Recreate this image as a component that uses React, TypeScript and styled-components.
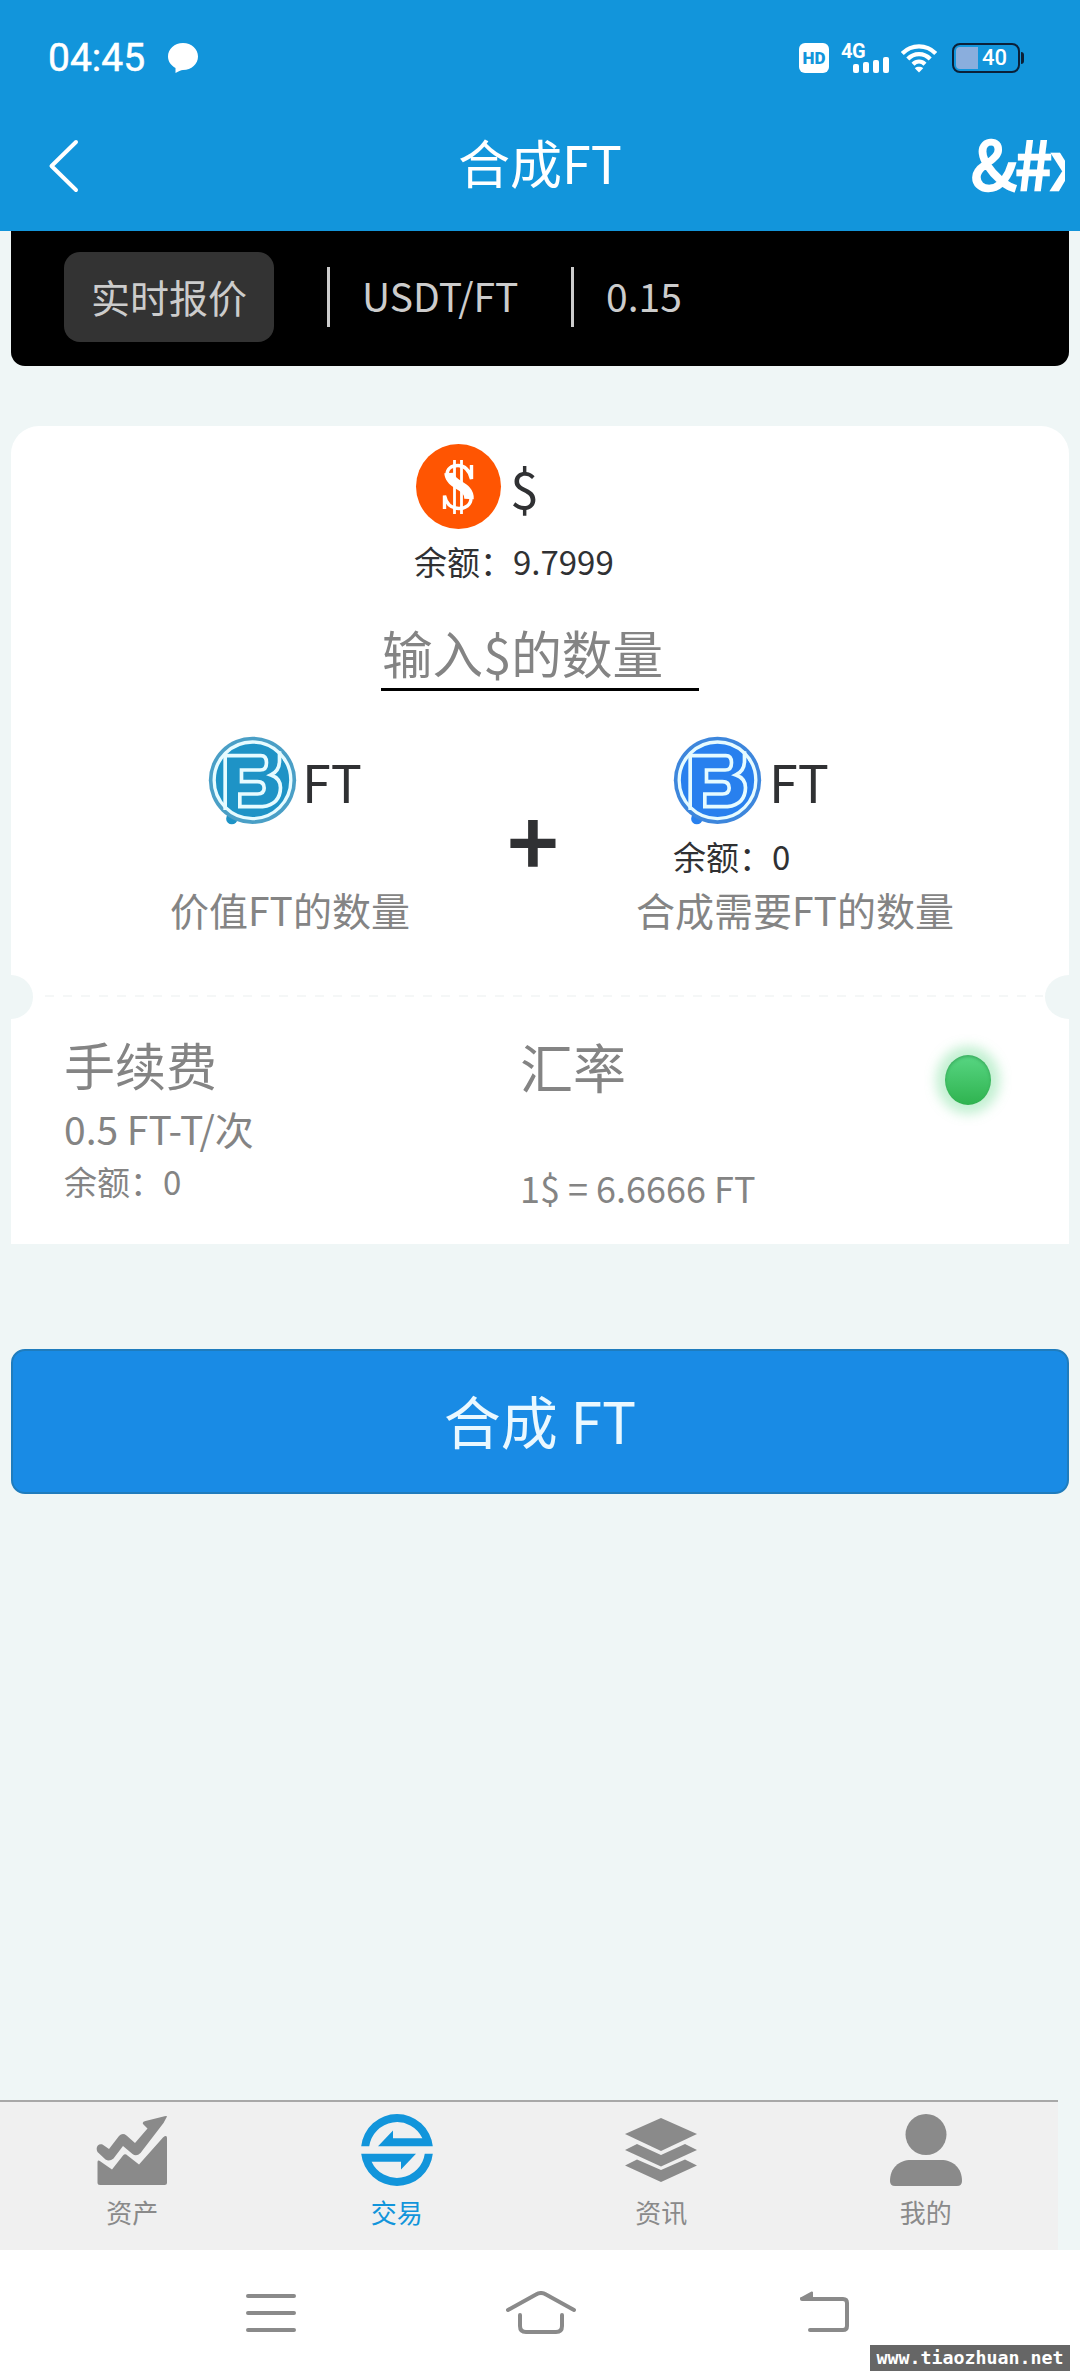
import React from "react";
import styled, { createGlobalStyle } from "styled-components";

const Global = createGlobalStyle`
  * { box-sizing: border-box; }
  html, body { margin: 0; padding: 0; background: #eff6f6; }
  body { font-family: "Noto Sans CJK SC", "Noto Sans", sans-serif; font-weight: 400; color: #303133; }
`;

const Page = styled.div`
  width: 1080px;
  height: 2376px;
  display: flex;
  flex-direction: column;
  background: #eff6f6;
  overflow: hidden;
`;

const Header = styled.header`
  height: 231px;
  background: #1295db;
  color: #fff;
  display: flex;
  flex-direction: column;
`;

const StatusBar = styled.div`
  height: 116px;
  padding: 0 56px 0 48px;
  display: flex;
  align-items: center;
`;

const Clock = styled.span`
  font: 400 39px/46px Roboto, sans-serif;
  width: 120px;
  -webkit-text-stroke: 0.5px #fff;
`;

const StatusIcons = styled.div`
  margin-left: auto;
  display: flex;
  align-items: center;
`;

const HdBadge = styled.span`
  width: 30px;
  height: 30px;
  border-radius: 6px;
  background: #fff;
  color: #1295db;
  font: 900 17px/31px Roboto, sans-serif;
  text-align: center;
  margin-right: 12px;
`;

const Network = styled.div`
  width: 48px;
  height: 30px;
  display: flex;
  margin-right: 12px;
`;

const NetworkLabel = styled.span`
  width: 12px;
  white-space: nowrap;
  font: 700 20px/16px Roboto, sans-serif;
  letter-spacing: -0.5px;
`;

const Bars = styled.div`
  flex: 1;
  display: flex;
  align-items: flex-end;
  justify-content: space-between;
`;

const Bar = styled.i<{ $h: number }>`
  width: 6px;
  height: ${(p) => p.$h}px;
  border-radius: 2px;
  background: #fff;
`;

const Battery = styled.div`
  width: 68px;
  height: 30px;
  border: 2px solid #0b2038;
  border-radius: 8px;
  padding: 2px;
  margin-left: 15px;
  display: flex;
  align-items: center;
`;

const Charge = styled.i`
  width: 22px;
  height: 22px;
  border-radius: 4px 0 0 4px;
  background: #8aaedd;
`;

const Percent = styled.span`
  font: 500 22px/24px Roboto, sans-serif;
  margin-left: 4px;
`;

const BatteryTip = styled.i`
  width: 3px;
  height: 12px;
  margin-left: 1px;
  border-radius: 0 3px 3px 0;
  background: #0b2038;
`;

const NavBar = styled.div`
  height: 99px;
  padding: 0 15px 0 48px;
  display: grid;
  grid-template-columns: 360px 1fr 94px;
  align-items: center;
`;

const PageTitle = styled.h1`
  margin: 0 0 8px;
  font-size: 52px;
  line-height: 76px;
  font-weight: inherit;
  padding-left: 50px;
`;

const NavAction = styled.span`
  font-size: 67px;
  line-height: 90px;
  font-weight: 400;
  letter-spacing: -1.5px;
  -webkit-text-stroke: 2.5px #fff;
  overflow: hidden;
  white-space: nowrap;
  margin-bottom: 10px;
`;

const Quote = styled.section`
  height: 135px;
  margin: 0 11px;
  padding: 0 53px 3px;
  border-radius: 0 0 14px 14px;
  background: #000;
  color: #ccc;
  display: flex;
  align-items: center;
  font-size: 39px;
  line-height: 57px;
`;

const QuoteChip = styled.span`
  width: 210px;
  height: 90px;
  line-height: 88px;
  border-radius: 16px;
  background: #333;
  text-align: center;
  margin-right: 53px;
`;

const QuoteCell = styled.span<{ $w: number }>`
  width: ${(p) => p.$w}px;
  height: 60px;
  border-left: 3px solid #ccc;
  padding-left: 32px;
`;

const Card = styled.section`
  height: 818px;
  margin: 60px 11px 0;
  background: #fff;
  border-radius: 28px 28px 0 0;
  display: flex;
  flex-direction: column;
`;

const Pay = styled.div`
  padding: 18px 0 0 370px;
  display: flex;
  flex-direction: column;
  align-items: flex-start;
`;

const TokenRow = styled.div<{ $gap: number; $indent: number; $h: number }>`
  height: ${(p) => p.$h}px;
  margin-left: ${(p) => p.$indent}px;
  display: flex;
  align-items: center;
  gap: ${(p) => p.$gap}px;
  font-size: 52px;
  line-height: 76px;
`;

const Balance = styled.div<{ $indent?: number; $top?: number }>`
  height: 48px;
  margin: ${(p) => p.$top ?? 0}px 0 0 ${(p) => p.$indent ?? 0}px;
  font-size: 33px;
  line-height: 50px;
`;

const AmountField = styled.div`
  width: 318px;
  height: 75px;
  margin-top: 32px;
  padding-left: 1px;
  border-bottom: 3px solid #000;
  color: #848484;
  font-size: 50.600px;
  line-height: 72px;
  white-space: nowrap;
`;

const Mix = styled.div`
  margin-top: 45px;
  padding-left: 159px;
  display: grid;
  grid-template-columns: 298px 130px 1fr;
`;

const MixColumn = styled.div<{ $pad?: number }>`
  padding-left: ${(p) => p.$pad ?? 0}px;
`;

const Plus = styled.div`
  height: 201px;
  padding-top: 3px;
  display: flex;
  align-items: center;
  justify-content: center;
  font-size: 88px;
  line-height: 100px;
  font-weight: 700;
`;

const Hint = styled.div`
  margin-top: 2px;
  color: #848484;
  font-size: 39px;
  line-height: 56px;
`;

const Perforation = styled.div`
  height: 44px;
  margin-top: 38px;
  display: flex;
  justify-content: space-between;
  align-items: center;
`;

const Notch = styled.i<{ $right?: boolean }>`
  width: ${(p) => (p.$right ? 24 : 22)}px;
  height: 44px;
  background: #eff6f6;
  border-radius: ${(p) => (p.$right ? "24px 0 0 24px / 22px 0 0 22px" : "0 22px 22px 0")};
`;

const Dashes = styled.i`
  flex: 1;
  height: 2px;
  margin: 0 2px 2px 12px;
  background: repeating-linear-gradient(90deg, #f5f7f7 0 9px, transparent 9px 18px);
`;

const Details = styled.div`
  padding: 15px 0 0 53px;
  display: flex;
  color: #848484;
`;

const DetailColumn = styled.div<{ $w: number }>`
  width: ${(p) => p.$w}px;
  white-space: nowrap;
`;

const DetailTitle = styled.div<{ $size: number; $lh: number }>`
  font-size: ${(p) => p.$size}px;
  line-height: ${(p) => p.$lh}px;
`;

const Fee = styled.div`
  margin-top: 6px;
  font-size: 39px;
  line-height: 56px;
`;

const Rate = styled.div`
  margin-top: 64px;
  font-size: 36px;
  line-height: 50px;
`;

const Lamp = styled.i`
  width: 46px;
  height: 50px;
  margin-top: 21px;
  border-radius: 50%;
  background: linear-gradient(#58d683, #2fb34f);
  box-shadow: 0 0 12px 9px rgba(88, 214, 131, 0.36), inset 0 2px 3px rgba(30, 130, 60, 0.45);
`;

const Submit = styled.button`
  height: 145px;
  margin: 105px 11px 0;
  padding: 0 0 5px;
  border: 2px solid #1f7cbd;
  border-radius: 14px;
  background: #198be5;
  color: #eaf8ff;
  font-family: inherit;
  font-weight: inherit;
  font-size: 57px;
  line-height: 80px;
`;

const TabBar = styled.nav`
  width: 1058px;
  height: 150px;
  margin-top: auto;
  border-top: 2px solid #a8a8a8;
  background: #f0f0f0;
  display: flex;
`;

const Tab = styled.a<{ $active?: boolean }>`
  flex: 1;
  padding-top: 12px;
  display: flex;
  flex-direction: column;
  align-items: center;
  color: ${(p) => (p.$active ? "#1295db" : "#8a8a8a")};
  font-size: 26px;
  line-height: 38px;
  svg { fill: currentColor; margin-bottom: 7px; }
`;

const SystemNav = styled.footer`
  height: 126px;
  background: #fff;
  display: flex;
  padding: 41px 0 0 246px;
  position: relative;
  svg {
    fill: none;
    stroke: #8a8a8a;
    stroke-width: 4;
    stroke-linecap: round;
    stroke-linejoin: round;
  }
`;

const Watermark = styled.span`
  position: absolute;
  left: 870px;
  bottom: 5px;
  width: 200px;
  height: 26px;
  background: #666;
  color: #fff;
  text-align: center;
  font: 700 18.300px/25px "DejaVu Sans Mono", monospace;
`;

const Bubble = () => (
  <svg width="30" height="30" viewBox="0 0 30 30" fill="#fff">
    <path d="M15 0C23.500 0 30 6 30 13.500S23.500 27 15 27C13 27 10 28.500 7.500 30V25C3 22.500 0 18.500 0 13.500C0 6 6.500 0 15 0Z" />
  </svg>
);

const Wifi = () => (
  <svg width="36" height="29" viewBox="0 0 36 29" fill="none" stroke="#fff" strokeWidth="4.200">
    <path d="M1.300 9.500C10.500 0 25.500 0 34.700 9.500" />
    <path d="M6.800 15C13 8.500 23 8.500 29.200 15" />
    <path d="M12 20.300C15.500 16.800 20.500 16.800 24 20.300" />
    <path d="M18 28.500L13.800 24.200C16 22.400 20 22.400 22.200 24.200Z" fill="#fff" stroke="none" />
  </svg>
);

const BackChevron = () => (
  <svg width="32" height="54" viewBox="0 0 32 54" fill="none" stroke="#fff" strokeWidth="4" strokeLinecap="round" strokeLinejoin="round">
    <path d="M28 3L3.500 27L28 51" />
  </svg>
);

const DollarDisc = styled.span`
  width: 85px;
  height: 85px;
  border-radius: 50%;
  background: #ff5502;
  display: flex;
  align-items: center;
  justify-content: center;
  svg { display: block; }
`;

const DollarMark = () => (
  <svg width="34" height="56" viewBox="0 0 34 56" fill="none" stroke="#fff">
    <path d="M12.500 1V55M19.500 1V55" strokeWidth="2.800" />
    <path d="M29.500 6V20C27 10 22 6.500 16 6.500C9 6.500 5 10 5 15.500C5 28 29 25 29 39C29 46 23.500 49.500 17 49.500C10 49.500 4.500 46 2.500 36.500V50" strokeWidth="3.400" />
    <path d="M7 14C8 27 28 26 27 40" strokeWidth="9.500" />
  </svg>
);

const TokenLogo = ({ main, rim }: { main: string; rim: string }) => (
  <svg width="89" height="89" viewBox="0 0 266 267">
    <circle cx="71" cy="248" r="17" fill={main} />
    <circle cx="133" cy="133" r="131" fill={rim} />
    <circle cx="133" cy="133" r="115" fill={main} stroke="#e6fbff" strokeWidth="10" />
    <path d="M218 50C226 62 236 76 242 94L226 74Z" fill="#e6fbff" />
    <path
      d="M51 222V59H158Q175 59 175 80Q175 102 156 102H100V137H148Q168 137 168 156Q168 174 148 174H95V212H163Q216 205 217 155Q217 127 188 117Q215 104 214 72V46"
      fill="none"
      stroke="#e6fbff"
      strokeWidth="11"
    />
  </svg>
);

const AssetsIcon = () => (
  <svg width="72" height="72" viewBox="-0.5 -2 72 72">
    <path d="M70.500 0.500L67 7L44 37Q40 41 36 38L26.500 30L17 42.500Q13 46 9 43.500L1 36C-1.500 31 2 27 6 28.500L12.500 33L22.500 20Q26 16.500 30 19.500L38.500 27L51 12.500L46.500 8Q45.500 5.500 49 5L68 0.200Q70.500 -0.500 70.500 0.500Z" />
    <path d="M1 46Q1.300 43.500 4 45.500L15.500 53.500L26.500 39.500Q28.500 37 31 39.500L42.500 48.500L66.500 21.500Q70.500 18.500 70.500 22V66.500Q70.500 69 68 69H3.500Q1 69 1 66.500Z" />
  </svg>
);

const TradeIcon = () => {
  const half = "M0.200 32.300A36 36 0 0 1 71.800 32.300H17L32 16.500V24.300H61.400A28 28 0 0 0 8.250 32.300Z";
  return (
    <svg width="72" height="72" viewBox="0 0 72 72">
      <path d={half} />
      <path d={half} transform="rotate(180 36 36)" />
    </svg>
  );
};

const NewsIcon = () => (
  <svg width="72" height="72" viewBox="0 -4 72 72">
    <path d="M36 0L72 16L36 33L0 16Z" />
    <path d="M0 32L12 26L36 37L60 26L72 32L36 48.500Z" />
    <path d="M0 47.500L12 41.500L36 52L60 41.500L72 47.500L36 64Z" />
  </svg>
);

const UserIcon = () => (
  <svg width="72" height="72" viewBox="0 0 72 72">
    <circle cx="36" cy="20.500" r="20.500" />
    <path d="M0 67C0 54 9 46 21 46H51C63 46 72 54 72 67Q72 72 67 72H5Q0 72 0 67Z" />
  </svg>
);

const tabs = [
  { label: "资产", Icon: AssetsIcon },
  { label: "交易", Icon: TradeIcon, active: true },
  { label: "资讯", Icon: NewsIcon },
  { label: "我的", Icon: UserIcon },
];

export default function App() {
  return (
    <Page>
      <Global />
      <Header>
        <StatusBar>
          <Clock>04:45</Clock>
          <Bubble />
          <StatusIcons>
            <HdBadge>HD</HdBadge>
            <Network>
              <NetworkLabel>4G</NetworkLabel>
              <Bars>
                {[9, 11, 13, 16].map((h) => (
                  <Bar key={h} $h={h} />
                ))}
              </Bars>
            </Network>
            <Wifi />
            <Battery>
              <Charge />
              <Percent>40</Percent>
            </Battery>
            <BatteryTip />
          </StatusIcons>
        </StatusBar>
        <NavBar>
          <BackChevron />
          <PageTitle>合成FT</PageTitle>
          <NavAction>&amp;#x</NavAction>
        </NavBar>
      </Header>

      <Quote>
        <QuoteChip>实时报价</QuoteChip>
        <QuoteCell $w={244}>USDT/FT</QuoteCell>
        <QuoteCell $w={200}>0.15</QuoteCell>
      </Quote>

      <Card>
        <Pay>
          <TokenRow $gap={9} $indent={35} $h={85}>
            <DollarDisc>
              <DollarMark />
            </DollarDisc>
            $
          </TokenRow>
          <Balance $indent={33} $top={7}>余额：9.7999</Balance>
          <AmountField>输入$的数量</AmountField>
        </Pay>

        <Mix>
          <MixColumn>
            <TokenRow $gap={5} $indent={38} $h={89}>
              <TokenLogo main="#1e93c6" rim="#4a9fc6" />
              FT
            </TokenRow>
            <Balance $top={6} />
            <Hint>价值FT的数量</Hint>
          </MixColumn>
          <Plus>+</Plus>
          <MixColumn $pad={38}>
            <TokenRow $gap={7} $indent={37} $h={89}>
              <TokenLogo main="#2880ee" rim="#3d86dc" />
              FT
            </TokenRow>
            <Balance $indent={37} $top={6}>余额：0</Balance>
            <Hint>合成需要FT的数量</Hint>
          </MixColumn>
        </Mix>

        <Perforation>
          <Notch />
          <Dashes />
          <Notch $right />
        </Perforation>

        <Details>
          <DetailColumn $w={456}>
            <DetailTitle $size={51} $lh={60}>手续费</DetailTitle>
            <Fee>0.5 FT-T/次</Fee>
            <Balance>余额：0</Balance>
          </DetailColumn>
          <DetailColumn $w={425}>
            <DetailTitle $size={53} $lh={64}>汇率</DetailTitle>
            <Rate>1$ = 6.6666 FT</Rate>
          </DetailColumn>
          <Lamp />
        </Details>
      </Card>

      <Submit>合成 FT</Submit>

      <TabBar>
        {tabs.map(({ label, Icon, active }) => (
          <Tab key={label} $active={active}>
            <Icon />
            {label}
          </Tab>
        ))}
      </TabBar>

      <SystemNav>
        <svg width="260" height="44" viewBox="0 0 260 44">
          <path d="M2 5H48M2 22H48M2 39H48" />
        </svg>
        <svg width="292" height="44" viewBox="0 0 292 44">
          <path d="M2 19L30 3.500Q35 0.500 40 3.500L68 19" />
          <path d="M14 24V35Q14 41 20 41H50Q56 41 56 35V24" />
        </svg>
        <svg width="54" height="44" viewBox="0 0 54 44">
          <path d="M4 8H45Q49 8 49 12V35Q49 39 45 39H12" />
          <path d="M3 7.500L14 1.500V8Z" strokeWidth="2" fill="#8a8a8a" />
        </svg>
        <Watermark>www.tiaozhuan.net</Watermark>
      </SystemNav>
    </Page>
  );
}
